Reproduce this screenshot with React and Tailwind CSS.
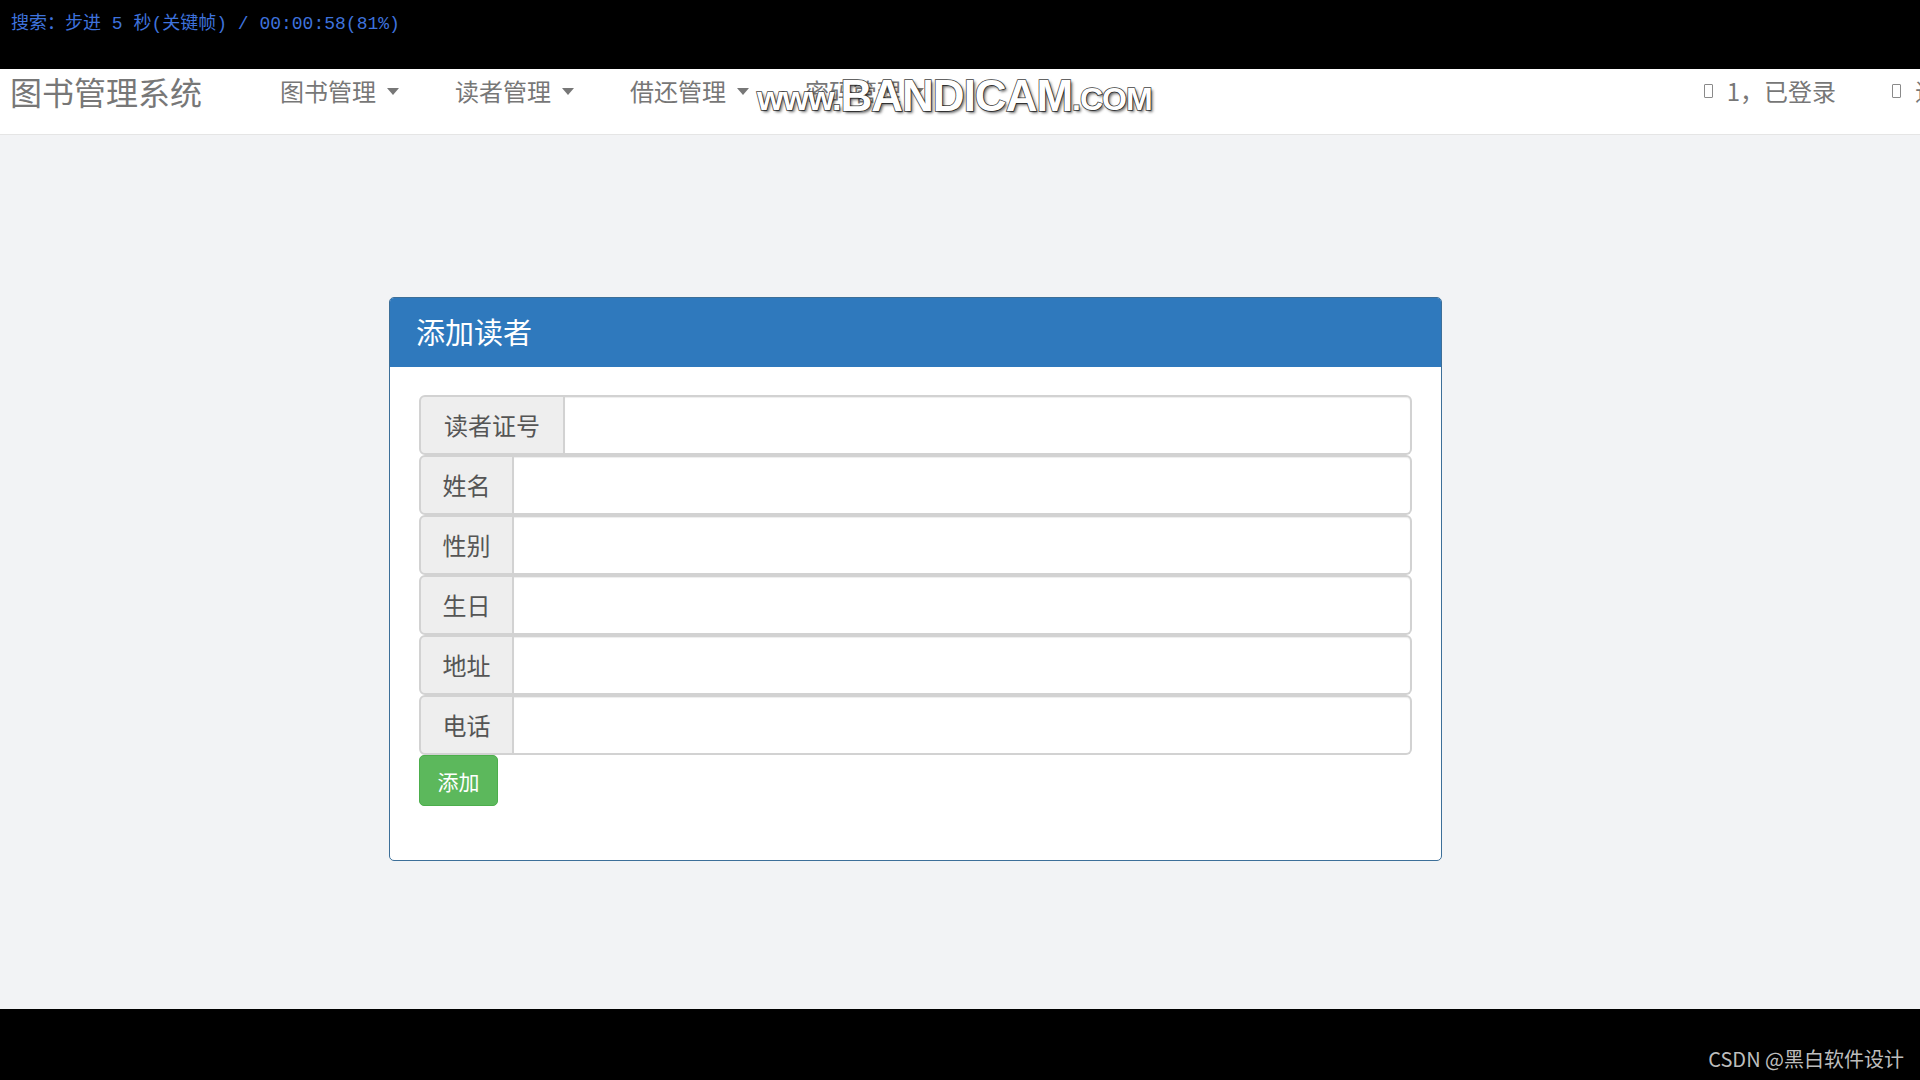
import React from 'react';

const cjk = { fontFamily: '"Noto Sans CJK SC", "Noto Sans", sans-serif' };

const Caret = () => (
  <span className="inline-block w-0 h-0 border-l-[6px] border-r-[6px] border-t-[7px] border-l-transparent border-r-transparent border-t-[#777] ml-[11px]" />
);

const IconBox = () => (
  <span className="inline-block w-[9px] h-[14px] border border-[#8a8a8a] rounded-[1px] mr-[14px]" />
);

const menus = ['图书管理', '读者管理', '借还管理', '密码管理'];

const fields = [
  { label: '读者证号', w: 'w-[146px]' },
  { label: '姓名', w: 'w-[95px]' },
  { label: '性别', w: 'w-[95px]' },
  { label: '生日', w: 'w-[95px]' },
  { label: '地址', w: 'w-[95px]' },
  { label: '电话', w: 'w-[95px]' },
];

const App = () => {
  return (
    <div className="w-[1920px] h-[1080px] flex flex-col bg-black overflow-hidden" style={cjk}>
      {/* player status line */}
      <div className="h-[69px] shrink-0 px-[11px] pt-[10px]">
        <span
          className="text-[18px] leading-[24px] text-[#3e72dc]"
          style={{ fontFamily: '"Liberation Mono", "Noto Sans CJK SC", monospace' }}
        >
          搜索：步进 5 秒(关键帧) / 00:00:58(81%)
        </span>
      </div>

      {/* navbar */}
      <nav className="relative h-[66px] shrink-0 bg-white border-b border-[#e5e5e5] flex items-start overflow-hidden px-[10px]">
        <span className="text-[32px] leading-[40px] text-[#777] shrink-0 mt-[2px]">图书管理系统</span>
        <ul className="flex items-center ml-[50px] shrink-0 mt-[6px]">
          {menus.map((m) => (
            <li key={m} className="px-[28px] flex items-center text-[24px] leading-[32px] text-[#777]">
              {m}
              <Caret />
            </li>
          ))}
        </ul>
        <ul className="flex items-center ml-auto mr-[-81px] shrink-0 mt-[6px]">
          <li className="px-[28px] flex items-center text-[24px] leading-[32px] text-[#777]">
            <IconBox />
            1，已登录
          </li>
          <li className="px-[28px] flex items-center text-[24px] leading-[32px] text-[#777]">
            <IconBox />
            退出
          </li>
        </ul>
        {/* recorder watermark */}
        <div
          className="absolute left-[757px] top-[4px] h-[44px] flex items-end text-white font-bold tracking-[-1px] [-webkit-text-stroke:1.5px_#444] [paint-order:stroke_fill] [text-shadow:2px_2px_3px_rgba(0,0,0,0.6)]"
          style={{ fontFamily: '"Liberation Sans", Arial, sans-serif' }}
        >
          <span className="text-[34px] leading-[38px]">www.</span>
          <span className="text-[44px] leading-[42px]">BANDICAM</span>
          <span className="text-[32px] leading-[36px]">.COM</span>
        </div>
      </nav>

      {/* content */}
      <main className="flex-1 bg-[#f2f3f5] pt-[162px] pl-[389px]">
        <div className="w-[1053px] border border-[#3d6f99] rounded-[5px] bg-white overflow-hidden">
          <div className="h-[69px] bg-[#2f79bd] flex items-center px-[26px] pb-[4px]">
            <h3 className="text-[29px] leading-[36px] text-white">添加读者</h3>
          </div>
          <div className="px-[29px] pt-[28px] pb-[54px]">
            <form className="flex flex-col" onSubmit={(e) => e.preventDefault()}>
              {fields.map((f) => (
                <div key={f.label} className="flex h-[60px]">
                  <span
                    className={`${f.w} shrink-0 flex items-center justify-center bg-[#eee] border-2 border-[#d2d2d2] rounded-l-[6px] text-[24px] text-[#555]`}
                  >
                    {f.label}
                  </span>
                  <input
                    type="text"
                    className="flex-1 bg-white border-2 border-l-0 border-[#d2d2d2] rounded-r-[6px] shadow-[inset_0_1px_1px_rgba(0,0,0,0.075)] outline-none px-[16px] text-[22px]"
                  />
                </div>
              ))}
              <div>
                <button
                  type="submit"
                  className="w-[79px] h-[51px] bg-[#5cb85c] border border-[#4cae4c] rounded-[5px] text-white text-[21px] leading-[28px]"
                >
                  添加
                </button>
              </div>
            </form>
          </div>
        </div>
      </main>

      {/* footer watermark */}
      <div className="h-[71px] shrink-0 flex items-start justify-end pr-[16px] pt-[37px]">
        <span className="text-[20px] leading-[26px] text-[#bdbdbd]">CSDN @黑白软件设计</span>
      </div>
    </div>
  );
};

export default App;
